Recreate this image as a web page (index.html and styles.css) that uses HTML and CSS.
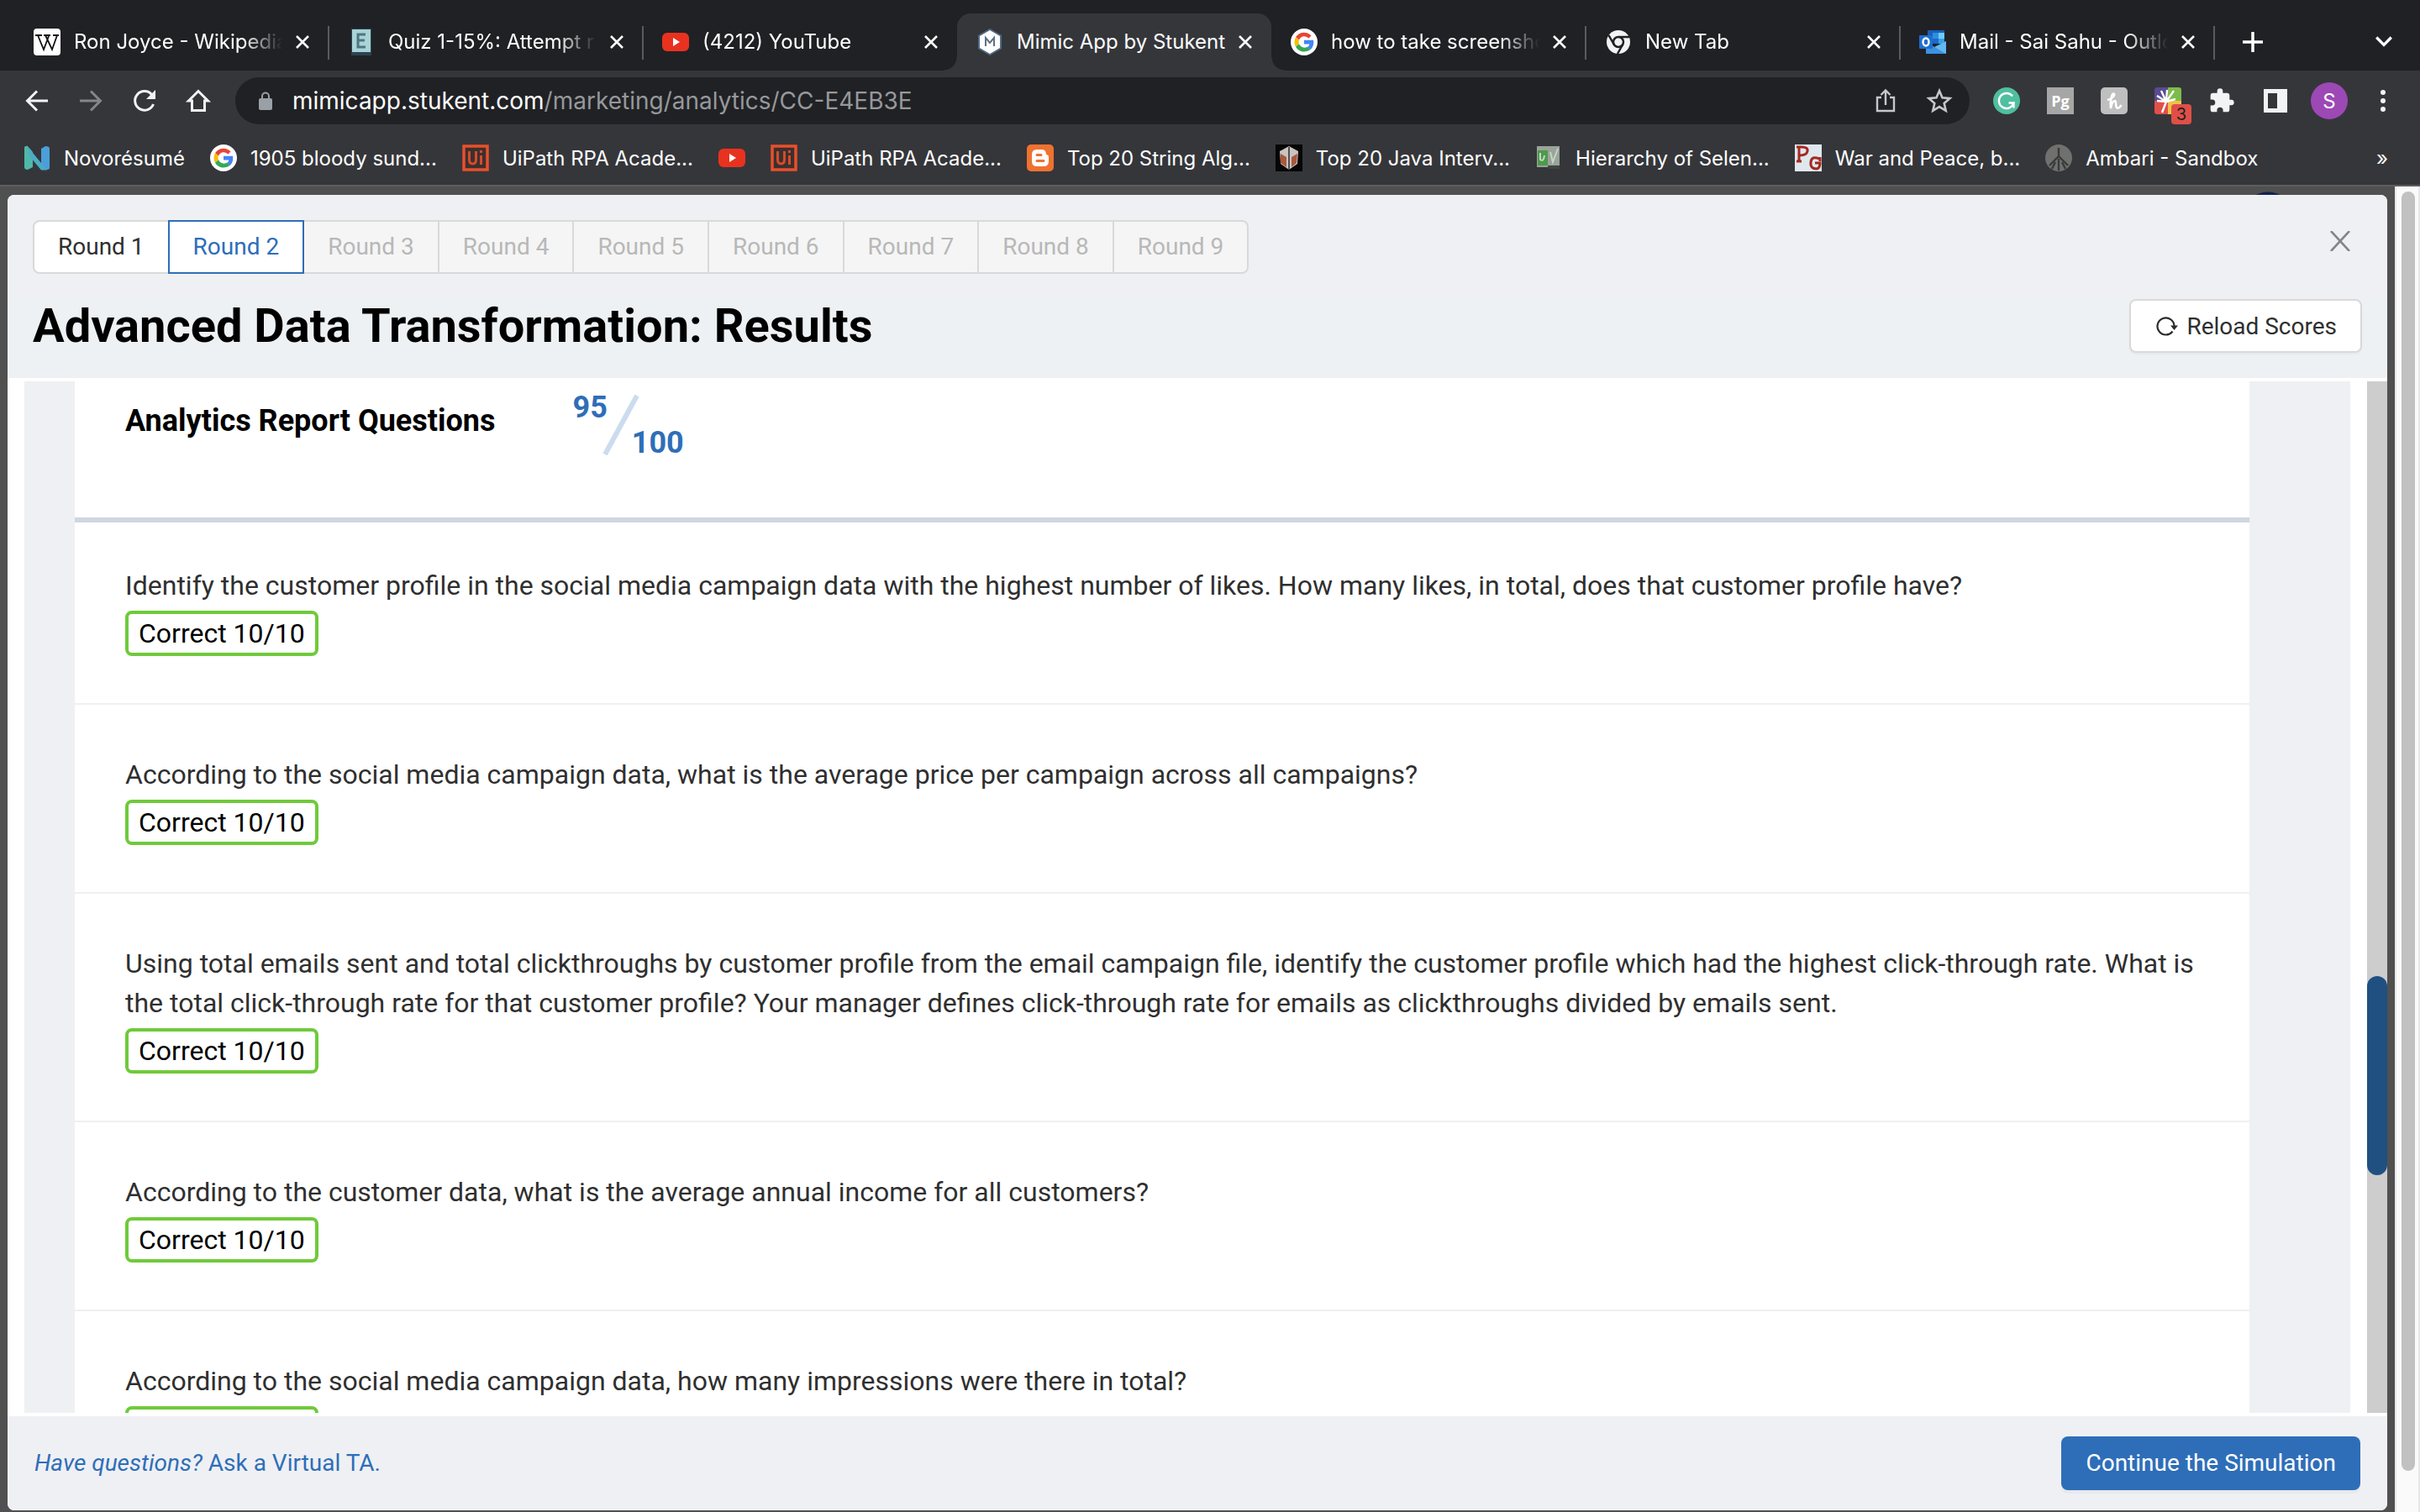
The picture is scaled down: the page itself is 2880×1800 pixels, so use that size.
FILE: index.html
```html
<!DOCTYPE html>
<html lang="en">
<head>
<meta charset="utf-8">
<title>Mimic App by Stukent</title>
<link rel="stylesheet" href="styles.css">
</head>
<body>
<svg class="defs" aria-hidden="true">
  <symbol id="close" viewBox="0 0 16 16"><path d="M1 1 15 15M15 1 1 15" stroke="currentColor" stroke-width="2.6" fill="none"/></symbol>
  <symbol id="google" viewBox="0 0 32 32"><circle cx="16" cy="16" r="16" fill="#fff"/><path d="M24.500 8.500A11.500 11.500 0 0 0 6 10.300l4 3.100a6.600 6.600 0 0 1 11.200-1.700z" fill="#ea4335"/><path d="M6 10.300a12 12 0 0 0 0 11.400l4-3.100a7 7 0 0 1 0-5.200z" fill="#fbbc05"/><path d="M6 21.700a11.600 11.600 0 0 0 17.700 3l-3.900-3A7 7 0 0 1 10 18.600z" fill="#34a853"/><path d="M16 13.800v4.800h6.500a5.500 5.500 0 0 1-2.700 3.500l3.900 3c3-2.800 4.100-7 3.400-11.300z" fill="#4285f4"/></symbol>
  <symbol id="youtube" viewBox="0 0 32 32"><rect y="5" width="32" height="22" rx="6" fill="#e8321f"/><path d="M13 11v10l8-5z" fill="#fff"/></symbol>
  <symbol id="uipath" viewBox="0 0 32 32"><path d="M2 2h28v28H2z" fill="#3c302f" stroke="#e8502b" stroke-width="3.500"/><path d="M8.500 8v10q0 5 4 5t4-5V8M22.500 13v11M22.500 7v3" fill="none" stroke="#d64b2a" stroke-width="3"/></symbol>
</svg>

<header class="browser">
  <nav class="tabstrip" aria-label="Browser tabs">
    <div class="tab"><svg class="fav" viewBox="0 0 32 32"><rect width="32" height="32" rx="4" fill="#fff"/><path d="M2 8h8M12 8h8M23 8h7M5 8l7 17L18 9M14 8l8 17 6-17" fill="none" stroke="#111" stroke-width="1.800"/></svg><span class="tab-name">Ron Joyce - Wikipedia</span><button class="tab-close" aria-label="Close tab"><svg><use href="#close"/></svg></button></div>
    <div class="tab"><svg class="fav" viewBox="0 0 32 32"><path d="M4 0h24v32H4z" fill="#2b4350"/><path d="M5 1h22v27H5z" fill="#a9d3d6"/><path d="M21 7h-9v15h9M12 14h8" fill="none" stroke="#4e7682" stroke-width="3"/></svg><span class="tab-name">Quiz 1-15%: Attempt r</span><button class="tab-close" aria-label="Close tab"><svg><use href="#close"/></svg></button></div>
    <div class="tab plain"><svg class="fav"><use href="#youtube"/></svg><span class="tab-name">(4212) YouTube</span><button class="tab-close" aria-label="Close tab"><svg><use href="#close"/></svg></button></div>
    <div class="tab active"><svg class="fav" viewBox="0 0 32 32"><path d="M16 0 30 8v16L16 32 2 24V8z" fill="#4f6b87"/><path d="M16 2 28 9v14L16 30 4 23V9z" fill="#fff"/><path d="M11 21V11l5 6 5-6v10" fill="none" stroke="#5d7188" stroke-width="2"/></svg><span class="tab-name">Mimic App by Stukent</span><button class="tab-close" aria-label="Close tab"><svg><use href="#close"/></svg></button></div>
    <div class="tab"><svg class="fav"><use href="#google"/></svg><span class="tab-name">how to take screensho</span><button class="tab-close" aria-label="Close tab"><svg><use href="#close"/></svg></button></div>
    <div class="tab"><svg class="fav" viewBox="0 0 32 32"><circle cx="16" cy="16" r="14" fill="#f1f3f4"/><circle cx="16" cy="16" r="6" fill="none" stroke="#202124" stroke-width="2.500"/><path d="M16 10h13M10.800 19 4.500 8M21.200 19 15 30" stroke="#202124" stroke-width="2.500"/></svg><span class="tab-name">New Tab</span><button class="tab-close" aria-label="Close tab"><svg><use href="#close"/></svg></button></div>
    <div class="tab"><svg class="fav" viewBox="0 0 32 32"><path d="M10 2h20v15H10z" fill="#1a5fb8"/><path d="M16 5h7v7h-7z" fill="#2f8ee0"/><path d="M23 5h7v7h-7z" fill="#6ccbf8"/><path d="M16 12h7v6h-7z" fill="#1b6ac6"/><path d="M23 12h7v6h-7z" fill="#3a9fe8"/><path d="M8 16l12 7 12-8v15H8z" fill="#3b93e0"/><path d="M32 15v15L18 22z" fill="#62b8f0"/><rect y="8" width="16" height="16" rx="1" fill="#1e6fd0"/><ellipse cx="8" cy="16" rx="3.500" ry="4.500" fill="none" stroke="#fff" stroke-width="2.400"/></svg><span class="tab-name">Mail - Sai Sahu - Outlo</span><button class="tab-close" aria-label="Close tab"><svg><use href="#close"/></svg></button></div>
    <button class="new-tab" aria-label="New tab"><svg viewBox="0 0 24 24"><path d="M12 0v24M0 12h24" stroke="#fff" stroke-width="3.500"/></svg></button>
    <button class="tab-search" aria-label="Search tabs"><svg viewBox="0 0 20 12"><path d="M2 1l8 8 8-8" fill="none" stroke="#fff" stroke-width="3"/></svg></button>
  </nav>

  <div class="toolbar">
    <button class="tool" aria-label="Back"><svg viewBox="0 0 32 32"><path d="M29 16H5M16 4.500 4.500 16 16 27.500" fill="none" stroke="#f1f3f4" stroke-width="3"/></svg></button>
    <button class="tool" aria-label="Forward"><svg viewBox="0 0 32 32"><path d="M3 16h24M16 4.500 27.500 16 16 27.500" fill="none" stroke="#85868a" stroke-width="3"/></svg></button>
    <button class="tool" aria-label="Reload"><svg viewBox="0 0 32 32"><path d="M26.500 20A11.300 11.300 0 1 1 24.500 8.500" fill="none" stroke="#f1f3f4" stroke-width="3"/><path d="M29 3v11H18z" fill="#f1f3f4"/></svg></button>
    <button class="tool" aria-label="Home"><svg viewBox="0 0 32 32"><path d="M16 4.500 4.500 16H8.500v11.500h15V16h4z" fill="none" stroke="#f1f3f4" stroke-width="3"/></svg></button>
    <div class="omnibox">
      <svg class="lock" viewBox="0 0 16 22"><rect y="8" width="16" height="14" rx="2" fill="#9aa0a6"/><path d="M4 9V5.500a4 4 0 0 1 8 0V9" fill="none" stroke="#9aa0a6" stroke-width="2"/></svg>
      <span class="url"><b>mimicapp.stukent.com</b>/marketing/analytics/CC-E4EB3E</span>
      <button class="tool" aria-label="Share"><svg viewBox="0 0 32 32"><path d="M11 12H6v16h20V12h-5M16 21V4M10.500 9 16 3.500 21.500 9" fill="none" stroke="#c4c7cb" stroke-width="2.400"/></svg></button>
      <button class="tool" aria-label="Bookmark"><svg viewBox="0 0 32 32"><path d="M16 4l3.500 8.300 9 .8-6.800 5.900 2 8.800-7.700-4.700-7.700 4.700 2-8.800-6.800-5.900 9-.8z" fill="none" stroke="#c4c7cb" stroke-width="2.600"/></svg></button>
    </div>
    <button class="tool" aria-label="Grammarly"><svg viewBox="0 0 32 32"><circle cx="16" cy="16" r="16" fill="#4fbf9f"/><path d="M23 10.500a9 9 0 1 0 1.500 8h-6M24.500 18.500v6" fill="none" stroke="#fff" stroke-width="2.400"/></svg></button>
    <button class="tool pg">Pg</button>
    <button class="tool" aria-label="Honey"><svg viewBox="0 0 32 32"><rect width="32" height="32" rx="5" fill="#bfbfbf"/><path d="M8 15C14 14 18 8 15.500 7.500S11 17 12 25c1-6 3-9 5-9s0 8 2.500 8.500 4-1.500 5-3.500" fill="none" stroke="#fff" stroke-width="2.600"/></svg></button>
    <button class="tool flower" aria-label="Extension with 3 alerts"><svg viewBox="0 0 32 32"><path d="M0 3q0-3 3-3h13v16H0z" fill="#5a4a90"/><path d="M16 0h13q3 0 3 3v13H16z" fill="#7fbb4a"/><path d="M0 16h16v16H3q-3 0-3-3z" fill="#e0504a"/><path d="M16 16h16v16H16z" fill="#efc24a"/><path d="M14 17 3 10M14 17 8 4M14 17l1-14M14 17 23 4M14 17l11-3M14 17l-5 13M14 17l-11-1" stroke="#fff" stroke-width="2.400"/></svg><span class="count">3</span></button>
    <button class="tool" aria-label="Extensions"><svg viewBox="0 0 24 24"><path d="M20.500 11H19V7c0-1.100-.9-2-2-2h-4V3.500a2.500 2.500 0 0 0-5 0V5H4c-1.100 0-2 .9-2 2v3.800h1.500a2.700 2.700 0 0 1 0 5.400H2V20c0 1.100.9 2 2 2h3.800v-1.500a2.700 2.700 0 0 1 5.400 0V22H17c1.100 0 2-.9 2-2v-4h1.500a2.500 2.500 0 0 0 0-5z" fill="#f1f3f4"/></svg></button>
    <button class="tool" aria-label="Side panel"><svg viewBox="0 0 32 32"><path d="M2 2h28v28H2zM7 7v18h11V7z" fill="#f1f3f4" fill-rule="evenodd"/></svg></button>
    <button class="tool avatar">S</button>
    <button class="tool" aria-label="Menu"><svg viewBox="0 0 32 32"><circle cx="16" cy="6" r="3" fill="#f1f3f4"/><circle cx="16" cy="16" r="3" fill="#f1f3f4"/><circle cx="16" cy="26" r="3" fill="#f1f3f4"/></svg></button>
  </div>

  <nav class="bookmarks" aria-label="Bookmarks">
    <a href="#"><svg viewBox="0 0 32 32"><path d="M1 4q0-3 4-2l6 7v18l-6 3q-4 0-4-3z" fill="#4fb8a8"/><path d="M21 5l5-3q5 0 5 3v23q0 2-4 2l-6-6z" fill="#4a9fd8"/><path d="M4 1.500 28 30.500h-7L8 15z" fill="#4cacc4"/></svg>Novorésumé</a>
    <a href="#"><svg><use href="#google"/></svg>1905 bloody sund...</a>
    <a href="#"><svg><use href="#uipath"/></svg>UiPath RPA Acade...</a>
    <a href="#" aria-label="YouTube"><svg><use href="#youtube"/></svg></a>
    <a href="#"><svg><use href="#uipath"/></svg>UiPath RPA Acade...</a>
    <a href="#"><svg viewBox="0 0 32 32"><rect width="32" height="32" rx="5" fill="#ee7230"/><path d="M12 6h6q5 0 5 6 3 0 3 3v5q0 6-6 6h-8q-6 0-6-6v-8q0-6 6-6z" fill="#fff"/><path d="M12 12.500h5M12 19.500h8" stroke="#ee7230" stroke-width="3" stroke-linecap="round"/></svg>Top 20 String Alg...</a>
    <a href="#"><svg viewBox="0 0 32 32"><path d="M0 0h32v32H0z" fill="#060606"/><path d="M16 2l11 6-1 15-10 7-10-7L5 8z" fill="#c9c4c0"/><path d="M6 11l7 4v12l-7-5zM26 11l-7 4v12l6-5z" fill="#a9583c"/><path d="M16 3v27" stroke="#56514f" stroke-width="2"/></svg>Top 20 Java Interv...</a>
    <a href="#"><svg viewBox="0 0 32 32"><path d="M2 2h27v25H2z" fill="#9ba39b"/><path d="M3 7h12v18H3z" fill="#4d9a4b"/><path d="M6 10v8q4 3 5-5M18 9l3 12 6-16" fill="none" stroke="#c5d6c3" stroke-width="2"/><path d="M15 25h14v4H15z" fill="#424342"/></svg>Hierarchy of Selen...</a>
    <a href="#"><svg viewBox="0 0 32 32"><path d="M0 0h32v32H0z" fill="#dfe8ef"/><path d="M2 3h6q8 0 7 5t-9 5M5 3v17M2 20h6M29 17q-9-4-10 4t7 8q4-1 4-7h-6M30 15v5" fill="none" stroke="#a5291f" stroke-width="3"/></svg>War and Peace, b...</a>
    <a href="#"><svg viewBox="0 0 32 32"><circle cx="16" cy="16" r="16" fill="#70706e"/><path d="M16 4v10M16 14 5 25M16 14l11 11M16 17v14M12 21l-4 8M20 21l4 8" fill="none" stroke="#393a3a" stroke-width="2.400"/></svg>Ambari - Sandbox</a>
    <button class="more" aria-label="More bookmarks">»</button>
  </nav>
</header>

<main class="viewport">
  <div class="backdrop">
    <section class="modal" role="dialog" aria-labelledby="title">
      <div class="modal-top">
        <div class="rounds">
          <button>Round 1</button><button class="current">Round 2</button><button disabled>Round 3</button><button disabled>Round 4</button><button disabled>Round 5</button><button disabled>Round 6</button><button disabled>Round 7</button><button disabled>Round 8</button><button disabled>Round 9</button>
        </div>
        <button class="modal-close" aria-label="Close"><svg viewBox="0 0 24 24"><path d="M1 0 23 24M23 0 1 24" stroke="#858585" stroke-width="2.600"/></svg></button>
      </div>
      <div class="modal-title">
        <h1 id="title">Advanced Data Transformation: Results</h1>
        <button class="reload"><svg viewBox="0 0 26 24"><path d="M19.500 18.500A10 10 0 1 1 21.500 12" fill="none" stroke="#2b2b2b" stroke-width="2.200"/><path d="M17 11.500h9L21.500 17z" fill="#2b2b2b"/></svg>Reload Scores</button>
      </div>
      <div class="modal-body">
        <div class="panel">
          <div class="report">
            <header class="report-head">
              <h2>Analytics Report Questions</h2>
              <div class="score"><span class="got">95</span><svg viewBox="0 0 44 72"><path d="M41 1 3 71" stroke="#cbdcee" stroke-width="6"/></svg><span class="max">100</span></div>
            </header>
            <article class="question"><p>Identify the customer profile in the social media campaign data with the highest number of likes. How many likes, in total, does that customer profile have?</p><span class="mark">Correct 10/10</span></article>
            <article class="question"><p>According to the social media campaign data, what is the average price per campaign across all campaigns?</p><span class="mark">Correct 10/10</span></article>
            <article class="question"><p>Using total emails sent and total clickthroughs by customer profile from the email campaign file, identify the customer profile which had the highest click-through rate. What is the total click-through rate for that customer profile? Your manager defines click-through rate for emails as clickthroughs divided by emails sent.</p><span class="mark">Correct 10/10</span></article>
            <article class="question"><p>According to the customer data, what is the average annual income for all customers?</p><span class="mark">Correct 10/10</span></article>
            <article class="question"><p>According to the social media campaign data, how many impressions were there in total?</p><span class="mark">Correct 10/10</span></article>
          </div>
        </div>
        <div class="inner-scroll"><div class="inner-thumb"></div></div>
      </div>
      <footer class="modal-foot">
        <a href="#"><em>Have questions?</em> Ask a Virtual TA.</a>
        <button class="primary">Continue the Simulation</button>
      </footer>
    </section>
  </div>
  <div class="page-scroll"><div class="page-thumb"></div></div>
</main>
</body>
</html>
```
FILE: styles.css
```css
* { box-sizing: border-box; }

body {
  margin: 0;
  height: 100vh;
  display: flex;
  flex-direction: column;
  overflow: hidden;
  background: #505050;
  font-family: Roboto, "Liberation Sans", sans-serif;
}

button {
  margin: 0;
  padding: 0;
  border: 0;
  background: none;
  font: inherit;
  color: inherit;
}

a { text-decoration: none; color: inherit; }
svg { display: block; flex: none; }
.defs { position: absolute; width: 0; height: 0; }

/* Browser chrome */
.browser {
  flex: none;
  background: #35363a;
  border-bottom: 2px solid #5c5d60;
  color: #fff;
  font-family: Inter, "Liberation Sans", sans-serif;
  font-size: 24px;
}

.tabstrip {
  display: flex;
  height: 84px;
  padding: 16px 32px 0 17px;
  background: #202124;
}

.tab {
  position: relative;
  flex: 0 1 374px;
  min-width: 0;
  display: flex;
  align-items: center;
  padding: 0 23px;
}

.tab::after {
  content: "";
  position: absolute;
  right: -1px;
  top: 15px;
  width: 2px;
  height: 40px;
  background: #5a5b5e;
}

.tab.plain::after { display: none; }

.tab.active {
  background: #35363a;
  border-radius: 16px 16px 0 0;
}

.tab.active::before,
.tab.active::after {
  content: "";
  position: absolute;
  top: auto;
  bottom: 0;
  width: 16px;
  height: 16px;
}

.tab.active::before {
  left: -16px;
  background: radial-gradient(circle at 0 0, #202124 15px, #35363a 16px);
}

.tab.active::after {
  right: -16px;
  background: radial-gradient(circle at 100% 0, #202124 15px, #35363a 16px);
}

.fav { width: 32px; height: 32px; }

.tab-name {
  flex: 1;
  min-width: 0;
  margin: 0 16px;
  overflow: hidden;
  white-space: nowrap;
  line-height: 32px;
  -webkit-mask-image: linear-gradient(to right, #000 calc(100% - 48px), transparent);
  mask-image: linear-gradient(to right, #000 calc(100% - 48px), transparent);
}

.tab.active .tab-name { -webkit-mask-image: none; mask-image: none; overflow: visible; }

.tab-close svg { width: 16px; height: 16px; }

.new-tab { margin-left: 34px; }
.new-tab svg { width: 24px; height: 24px; }
.tab-search { margin-left: auto; }
.tab-search svg { width: 22px; height: 14px; }

.toolbar {
  display: flex;
  align-items: center;
  gap: 32px;
  height: 72px;
  padding: 0 28px;
}

.tool {
  flex: none;
  width: 32px;
  height: 32px;
}

.tool svg { width: 32px; height: 32px; }

.omnibox {
  flex: 1;
  display: flex;
  align-items: center;
  gap: 32px;
  height: 56px;
  margin-left: -4px;
  margin-right: -4px;
  padding: 0 20px 0 28px;
  border-radius: 28px;
  background: #202124;
}

.lock { width: 16px; height: 22px; }

.url {
  flex: 1;
  margin-left: -8px;
  font-size: 28px;
  color: #96989c;
}

.url b { font-weight: 400; color: #fff; }

.pg {
  background: #a6a6a6;
  font-family: "Open Sans", sans-serif;
  font-size: 18px;
  font-weight: 700;
}

.flower { position: relative; }

.count {
  position: absolute;
  left: 20px;
  top: 20px;
  width: 24px;
  height: 24px;
  border-radius: 4px;
  background: #e04f47;
  color: #202124;
  font-size: 20px;
  line-height: 24px;
}

.avatar {
  width: 44px;
  height: 44px;
  margin: 0 -6px;
  border-radius: 50%;
  background: #9c48b5;
}

.bookmarks {
  display: flex;
  align-items: center;
  gap: 30px;
  height: 64px;
  padding: 0 38px 0 28px;
}

.bookmarks a {
  display: flex;
  align-items: center;
  gap: 16px;
  white-space: nowrap;
}

.bookmarks svg { width: 32px; height: 32px; }
.more { margin-left: auto; }

/* Page behind the dialog */
.viewport {
  flex: 1;
  min-height: 0;
  display: flex;
}

.backdrop {
  flex: 1;
  min-width: 0;
  padding: 10px 9px 2px;
  background: radial-gradient(circle at calc(100% - 151px) 37px, #12244a 30px, transparent 31px), #505050;
}

.page-scroll {
  flex: none;
  width: 30px;
  padding: 6px 4px 49px 6px;
  background: #fafafa;
  border: solid #e8e8e8;
  border-width: 0 2px;
}

.page-thumb {
  width: 16px;
  height: 100%;
  border-radius: 8px;
  background: #c1c1c1;
}

/* Dialog */
.modal {
  height: 100%;
  display: flex;
  flex-direction: column;
  overflow: hidden;
  border-radius: 8px;
  background: #fff;
  color: #2f2f2f;
  font-size: 28px;
}

.modal-top {
  display: flex;
  justify-content: space-between;
  align-items: flex-start;
  padding: 30px 44px 30px 30px;
  background: #eff0f4;
}

.rounds { display: flex; }

.rounds button {
  height: 64px;
  padding: 0 28px;
  border: 2px solid #d9d9d9;
  background: #fff;
  line-height: 60px;
}

.rounds button + button { margin-left: -2px; }
.rounds button:first-child { border-radius: 8px 0 0 8px; }
.rounds button:last-child { border-radius: 0 8px 8px 0; }
.rounds button:disabled { background: #f5f5f5; color: #b8b8b8; }

.rounds .current {
  position: relative;
  border-color: #2e6eb8;
  color: #2e6eb8;
}

.modal-close { margin-top: 13px; }
.modal-close svg { width: 24px; height: 24px; }

.modal-title {
  display: flex;
  justify-content: space-between;
  align-items: flex-start;
  padding: 0 30px 30px;
  background: #edf1f4;
}

h1 {
  margin: 0;
  color: #000;
  font-size: 56px;
  font-weight: 700;
  line-height: 64px;
}

.reload {
  display: flex;
  align-items: center;
  gap: 10px;
  height: 64px;
  padding: 0 28px 0 30px;
  border: 2px solid #d9d9d9;
  border-radius: 8px;
  background: #fff;
  box-shadow: 0 2px 2px #00000008;
}

.reload svg { width: 26px; height: 24px; }

.modal-body {
  flex: 1;
  min-height: 0;
  display: flex;
  justify-content: space-between;
  padding: 4px 0 4px 20px;
}

.panel {
  flex: 1;
  min-width: 0;
  margin-right: 20px;
  padding: 0 120px 0 60px;
  overflow: hidden;
  background: #eff0f4;
}

.report { background: #fff; }

.report-head {
  display: flex;
  align-items: flex-start;
  gap: 92px;
  height: 168px;
  padding: 16px 60px 0;
  border-bottom: 6px solid #cfd7e0;
}

h2 {
  margin: 10px 0 0;
  color: #000;
  font-size: 36px;
  font-weight: 700;
  line-height: 42px;
}

.score {
  display: flex;
  color: #2e6eb8;
  font-size: 36px;
  font-weight: 700;
  line-height: 30px;
}

.score svg { width: 44px; height: 72px; margin: 0 -9px 0 -6px; }
.max { align-self: flex-end; }

.question {
  padding: 60px 60px 56px;
  border-bottom: 2px solid #f0f0f0;
}

.report-head + .question { padding-top: 52px; }

.question p {
  margin: 0 0 6px;
  font-size: 32px;
  line-height: 47px;
}

.mark {
  display: block;
  width: fit-content;
  padding: 0 12px;
  border: 4px solid #6fca3a;
  border-radius: 8px;
  color: #000;
  font-size: 32px;
  line-height: 46px;
}

.inner-scroll {
  flex: none;
  width: 24px;
  padding-top: 708px;
  background: #cdcdcd;
}

.inner-thumb {
  height: 237px;
  border-radius: 12px;
  background: #205081;
}

.modal-foot {
  display: flex;
  justify-content: space-between;
  align-items: center;
  height: 112px;
  padding: 0 32px;
  background: #eff0f4;
  color: #2e6eb8;
}

.modal-foot a { padding-bottom: 2px; }

.primary {
  height: 64px;
  padding: 0 29px 2px;
  border-radius: 8px;
  background: #2e6eb8;
  color: #fff;
  box-shadow: 0 4px 0 #00000008;
}
```
